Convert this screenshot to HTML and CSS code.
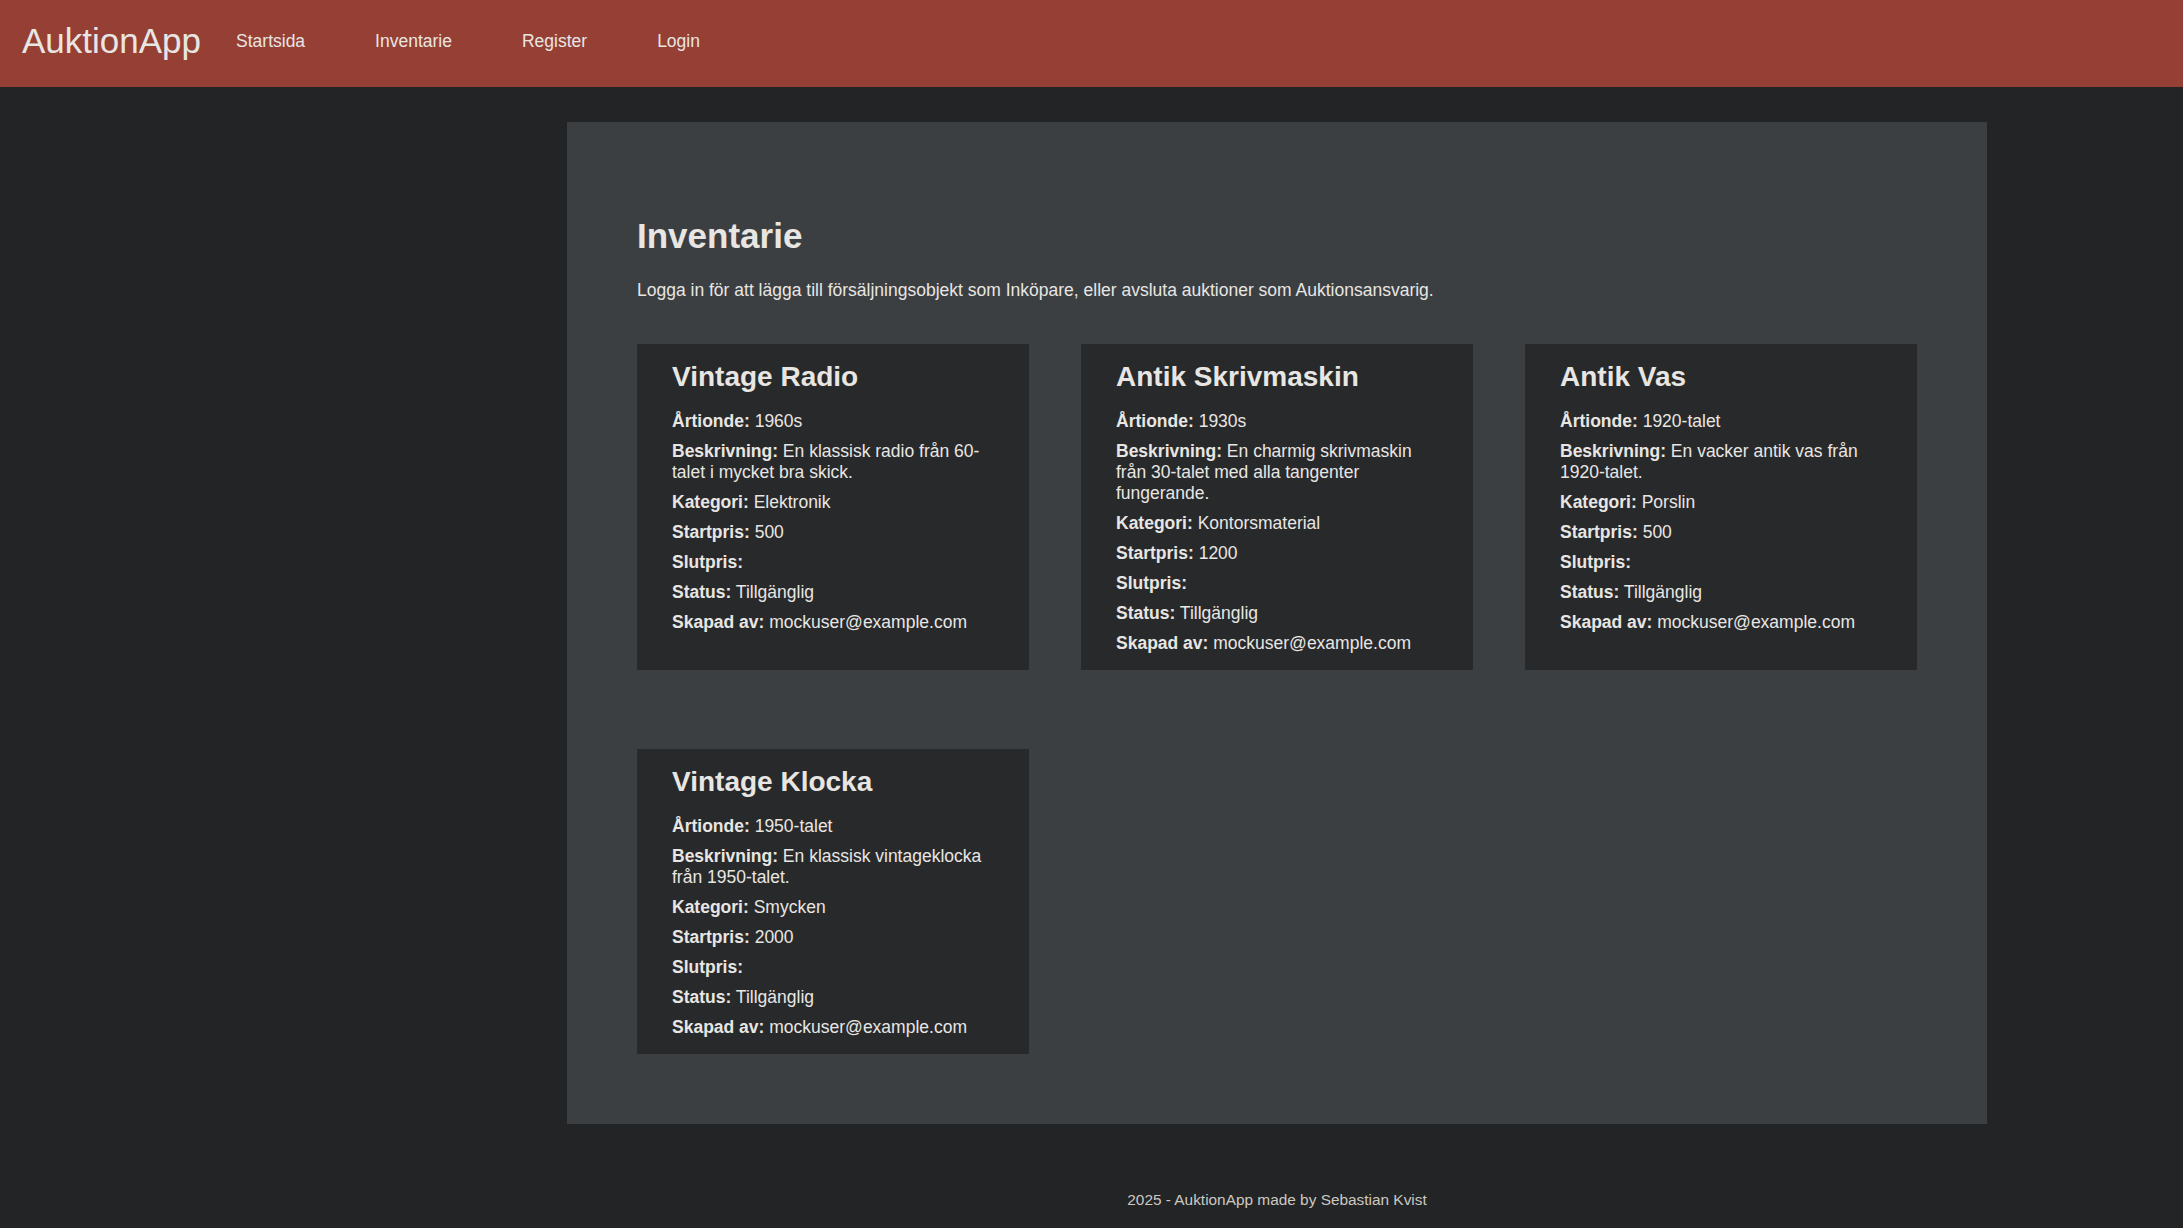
FILE: index.html
```html
<!DOCTYPE html>
<html lang="sv">
<head>
<meta charset="utf-8">
<title>Inventarie - AuktionApp</title>
<link rel="stylesheet" href="styles.css">
</head>
<body>
<header class="topbar">
  <a class="brand" href="#">AuktionApp</a>
  <nav class="nav">
    <a class="nav-link" href="#">Startsida</a>
    <a class="nav-link" href="#">Inventarie</a>
    <a class="nav-link" href="#">Register</a>
    <a class="nav-link" href="#">Login</a>
  </nav>
</header>
<div class="page">
  <main class="panel">
    <h1 class="title">Inventarie</h1>
    <p class="lead">Logga in för att lägga till försäljningsobjekt som Inköpare, eller avsluta auktioner som Auktionsansvarig.</p>
    <div class="grid">
      <article class="card">
        <h2 class="card-title">Vintage Radio</h2>
        <p><b>Årtionde:</b> 1960s</p>
        <p><b>Beskrivning:</b> En klassisk radio från 60-talet i mycket bra skick.</p>
        <p><b>Kategori:</b> Elektronik</p>
        <p><b>Startpris:</b> 500</p>
        <p><b>Slutpris:</b> </p>
        <p><b>Status:</b> Tillgänglig</p>
        <p><b>Skapad av:</b> mockuser@example.com</p>
      </article>
      <article class="card">
        <h2 class="card-title">Antik Skrivmaskin</h2>
        <p><b>Årtionde:</b> 1930s</p>
        <p><b>Beskrivning:</b> En charmig skrivmaskin från 30-talet med alla tangenter fungerande.</p>
        <p><b>Kategori:</b> Kontorsmaterial</p>
        <p><b>Startpris:</b> 1200</p>
        <p><b>Slutpris:</b> </p>
        <p><b>Status:</b> Tillgänglig</p>
        <p><b>Skapad av:</b> mockuser@example.com</p>
      </article>
      <article class="card">
        <h2 class="card-title">Antik Vas</h2>
        <p><b>Årtionde:</b> 1920-talet</p>
        <p><b>Beskrivning:</b> En vacker antik vas från 1920-talet.</p>
        <p><b>Kategori:</b> Porslin</p>
        <p><b>Startpris:</b> 500</p>
        <p><b>Slutpris:</b> </p>
        <p><b>Status:</b> Tillgänglig</p>
        <p><b>Skapad av:</b> mockuser@example.com</p>
      </article>
      <article class="card">
        <h2 class="card-title">Vintage Klocka</h2>
        <p><b>Årtionde:</b> 1950-talet</p>
        <p><b>Beskrivning:</b> En klassisk vintageklocka från 1950-talet.</p>
        <p><b>Kategori:</b> Smycken</p>
        <p><b>Startpris:</b> 2000</p>
        <p><b>Slutpris:</b> </p>
        <p><b>Status:</b> Tillgänglig</p>
        <p><b>Skapad av:</b> mockuser@example.com</p>
      </article>
    </div>
  </main>
  <footer class="footer">2025 - AuktionApp made by Sebastian Kvist</footer>
</div>
</body>
</html>
```
FILE: styles.css
```css
html, body {
  margin: 0;
  padding: 0;
}
body {
  background: #222426;
  color: #e8e6e3;
  font-family: "Liberation Sans", Arial, sans-serif;
  font-size: 17.5px;
}
a {
  color: inherit;
  text-decoration: none;
}
.topbar {
  box-sizing: border-box;
  height: 87px;
  background: #963f34;
  display: flex;
  align-items: center;
  padding: 0 0 5px 22px;
}
.brand {
  font-size: 35px;
  color: #e8e6e3;
}
.nav {
  display: flex;
  gap: 70px;
  margin-left: 35px;
}
.nav-link {
  font-size: 17.5px;
  color: #e8e6e3;
}
.page {
  margin: 35px 0 0 567px;
  width: 1420px;
}
.panel {
  background: #3b3f42;
  padding: 70px;
}
.title {
  margin: 24px 0 24px;
  font-size: 35px;
  font-weight: bold;
  line-height: normal;
}
.lead {
  margin: 0 0 43px;
  line-height: 21px;
}
.grid {
  display: grid;
  grid-template-columns: repeat(3, 1fr);
  column-gap: 52px;
  row-gap: 79px;
}
.card {
  background: #28292b;
  padding: 17px 35px 16px;
}
.card-title {
  margin: 0 0 18px;
  font-size: 28px;
  font-weight: bold;
  line-height: normal;
}
.card p {
  margin: 0 0 9px;
  line-height: 21px;
}
.card p:last-child {
  margin-bottom: 0;
}
.footer {
  text-align: center;
  font-size: 15.4px;
  color: #cdc8c2;
  padding-top: 67px;
  padding-bottom: 18px;
}
```
